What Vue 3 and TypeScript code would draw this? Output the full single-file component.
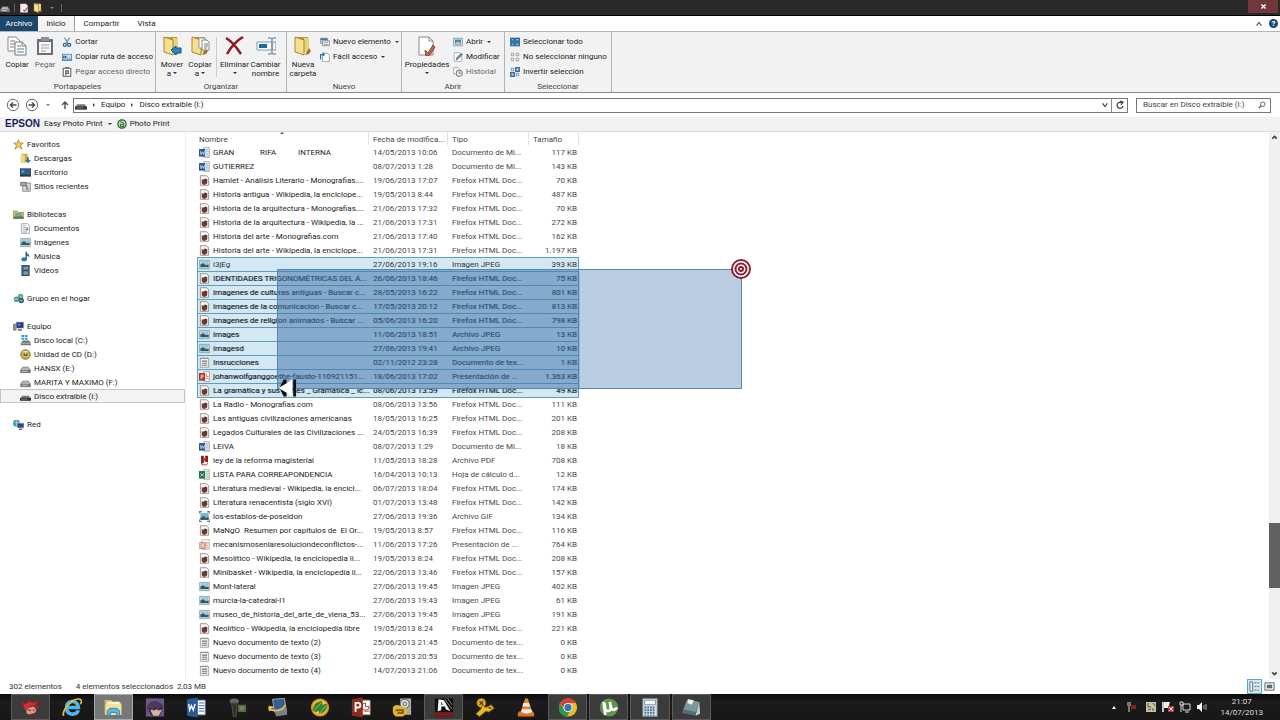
<script setup lang="ts">
import { ref } from 'vue'

interface FileRow { icon: string; name: string; date: string; type: string; size: string; selected?: boolean }
interface NavItem { icon: string; label: string; current?: boolean }
interface NavGroup { icon: string; label: string; items: NavItem[] }
interface LargeAction { icon: string; lines: string[]; menu?: boolean; wide?: boolean; off?: boolean; divider?: boolean }
interface SmallAction { icon: string; label: string; menu?: boolean; off?: boolean }
interface RibbonGroup { id: string; title: string; large: LargeAction[]; small: SmallAction[] }

const ribbon: RibbonGroup[] = [
  {
    id: 'clipboard', title: 'Portapapeles',
    large: [{ icon: 'copy', lines: ['Copiar'] }, { icon: 'paste', lines: ['Pegar'], off: true }],
    small: [
      { icon: 'cut', label: 'Cortar' },
      { icon: 'path', label: 'Copiar ruta de acceso' },
      { icon: 'shortcut', label: 'Pegar acceso directo', off: true },
    ],
  },
  {
    id: 'organize', title: 'Organizar',
    large: [
      { icon: 'move', lines: ['Mover', 'a'], menu: true },
      { icon: 'copyto', lines: ['Copiar', 'a'], menu: true },
      { icon: 'delete', lines: ['Eliminar', ''], menu: true, wide: true, divider: true },
      { icon: 'rename', lines: ['Cambiar', 'nombre'], wide: true },
    ],
    small: [],
  },
  {
    id: 'new', title: 'Nuevo',
    large: [{ icon: 'folder', lines: ['Nueva', 'carpeta'] }],
    small: [
      { icon: 'newitem', label: 'Nuevo elemento', menu: true },
      { icon: 'easy', label: 'Fácil acceso', menu: true },
    ],
  },
  {
    id: 'open', title: 'Abrir',
    large: [{ icon: 'props', lines: ['Propiedades', ''], menu: true }],
    small: [
      { icon: 'open', label: 'Abrir', menu: true },
      { icon: 'edit', label: 'Modificar' },
      { icon: 'history', label: 'Historial', off: true },
    ],
  },
  {
    id: 'select', title: 'Seleccionar', large: [],
    small: [
      { icon: 'selall', label: 'Seleccionar todo' },
      { icon: 'selnone', label: 'No seleccionar ninguno' },
      { icon: 'selinv', label: 'Invertir selección' },
    ],
  },
]

const nav: NavGroup[] = [
  { icon: 'star', label: 'Favoritos', items: [
    { icon: 'downloads', label: 'Descargas' },
    { icon: 'desktop', label: 'Escritorio' },
    { icon: 'recent', label: 'Sitios recientes' },
  ] },
  { icon: 'library', label: 'Bibliotecas', items: [
    { icon: 'document', label: 'Documentos' },
    { icon: 'image', label: 'Imágenes' },
    { icon: 'music', label: 'Música' },
    { icon: 'video', label: 'Vídeos' },
  ] },
  { icon: 'homegroup', label: 'Grupo en el hogar', items: [] },
  { icon: 'computer', label: 'Equipo', items: [
    { icon: 'localdisk', label: 'Disco local (C:)' },
    { icon: 'cd', label: 'Unidad de CD (D:)' },
    { icon: 'drive', label: 'HANSX (E:)' },
    { icon: 'drive', label: 'MARITA Y MAXIMO (F:)' },
    { icon: 'drivedark', label: 'Disco extraíble (I:)', current: true },
  ] },
  { icon: 'network', label: 'Red', items: [] },
]

const fx = 'Firefox HTML Doc...'
const files: FileRow[] = [
  { icon: 'word', name: 'GRAN             RIFA           INTERNA', date: '14/05/2013 10:06', type: 'Documento de Mi...', size: '117 KB' },
  { icon: 'word', name: 'GUTIERREZ', date: '08/07/2013 1:28', type: 'Documento de Mi...', size: '143 KB' },
  { icon: 'html', name: 'Hamlet - Análisis Literario - Monografias....', date: '19/06/2013 17:07', type: fx, size: '70 KB' },
  { icon: 'html', name: 'Historia antigua - Wikipedia, la enciclope...', date: '19/05/2013 8:44', type: fx, size: '487 KB' },
  { icon: 'html', name: 'Historia de la arquitectura - Monografias....', date: '21/06/2013 17:32', type: fx, size: '70 KB' },
  { icon: 'html', name: 'Historia de la arquitectura - Wikipedia, la ...', date: '21/06/2013 17:31', type: fx, size: '272 KB' },
  { icon: 'html', name: 'Historia del arte - Monografias.com', date: '21/06/2013 17:40', type: fx, size: '162 KB' },
  { icon: 'html', name: 'Historia del arte - Wikipedia, la enciclope...', date: '21/06/2013 17:31', type: fx, size: '1.197 KB' },
  { icon: 'image', name: 'i3jEg', date: '27/06/2013 19:16', type: 'Imagen JPEG', size: '393 KB', selected: true },
  { icon: 'html', name: 'IDENTIDADES TRIGONOMÉTRICAS DEL Á...', date: '26/06/2013 18:46', type: fx, size: '75 KB', selected: true },
  { icon: 'html', name: 'imagenes de culturas antiguas - Buscar c...', date: '28/05/2013 16:22', type: fx, size: '801 KB', selected: true },
  { icon: 'html', name: 'imagenes de la comunicacion - Buscar c...', date: '17/05/2013 20:12', type: fx, size: '813 KB', selected: true },
  { icon: 'html', name: 'imagenes de religion animados - Buscar ...', date: '05/06/2013 16:20', type: fx, size: '798 KB', selected: true },
  { icon: 'image', name: 'images', date: '11/06/2013 18:51', type: 'Archivo JPEG', size: '13 KB', selected: true },
  { icon: 'image', name: 'imagesd', date: '27/06/2013 19:41', type: 'Archivo JPEG', size: '10 KB', selected: true },
  { icon: 'text', name: 'Insrucciones', date: '02/11/2012 23:28', type: 'Documento de tex...', size: '1 KB', selected: true },
  { icon: 'ppt', name: 'johanwolfganggoethe-fausto-110921151...', date: '18/06/2013 17:02', type: 'Presentación de ...', size: '1.363 KB', selected: true },
  { icon: 'html', name: 'La gramática y sus partes _ Gramática _ Ic...', date: '08/06/2013 13:59', type: fx, size: '49 KB', selected: true },
  { icon: 'html', name: 'La Radio - Monografias.com', date: '08/06/2013 13:56', type: fx, size: '111 KB' },
  { icon: 'html', name: 'Las antiguas civilizaciones americanas', date: '18/05/2013 16:25', type: fx, size: '201 KB' },
  { icon: 'html', name: 'Legados Culturales de las Civilizaciones ...', date: '24/05/2013 16:39', type: fx, size: '208 KB' },
  { icon: 'word', name: 'LEIVA', date: '08/07/2013 1:29', type: 'Documento de Mi...', size: '18 KB' },
  { icon: 'pdf', name: 'ley de la reforma magisterial', date: '11/05/2013 18:28', type: 'Archivo PDF', size: '708 KB' },
  { icon: 'excel', name: 'LISTA PARA CORREAPONDENCIA', date: '16/04/2013 10:13', type: 'Hoja de cálculo d...', size: '12 KB' },
  { icon: 'html', name: 'Literatura medieval - Wikipedia, la encicl...', date: '06/07/2013 18:04', type: fx, size: '174 KB' },
  { icon: 'html', name: 'Literatura renacentista (siglo XVI)', date: '01/07/2013 13:48', type: fx, size: '142 KB' },
  { icon: 'gif', name: 'los-establos-de-poseidon', date: '27/06/2013 19:36', type: 'Archivo GIF', size: '134 KB' },
  { icon: 'html', name: 'MaNgO  Resumen por capítulos de  El Or...', date: '19/05/2013 8:57', type: fx, size: '116 KB' },
  { icon: 'pptold', name: 'mecanismosenlaresoluciondeconflictos-...', date: '11/06/2013 17:26', type: 'Presentación de ...', size: '764 KB' },
  { icon: 'html', name: 'Mesolítico - Wikipedia, la enciclopedia li...', date: '19/05/2013 8:24', type: fx, size: '208 KB' },
  { icon: 'html', name: 'Minibasket - Wikipedia, la enciclopedia li...', date: '22/06/2013 13:46', type: fx, size: '157 KB' },
  { icon: 'image', name: 'Mont-lateral', date: '27/06/2013 19:45', type: 'Imagen JPEG', size: '402 KB' },
  { icon: 'image', name: 'murcia-la-catedral-l1', date: '27/06/2013 19:43', type: 'Imagen JPEG', size: '61 KB' },
  { icon: 'image', name: 'museo_de_historia_del_arte_de_viena_53...', date: '27/06/2013 19:45', type: 'Imagen JPEG', size: '191 KB' },
  { icon: 'html', name: 'Neolítico - Wikipedia, la enciclopedia libre', date: '19/05/2013 8:24', type: fx, size: '221 KB' },
  { icon: 'text', name: 'Nuevo documento de texto (2)', date: '25/06/2013 21:45', type: 'Documento de tex...', size: '0 KB' },
  { icon: 'text', name: 'Nuevo documento de texto (3)', date: '27/06/2013 20:53', type: 'Documento de tex...', size: '0 KB' },
  { icon: 'text', name: 'Nuevo documento de texto (4)', date: '14/07/2013 21:06', type: 'Documento de tex...', size: '0 KB' },
]

const tasks = [
  { icon: 'natsu', name: 'Personaje', state: 'running' },
  { icon: 'ie', name: 'Internet Explorer', state: '' },
  { icon: 'explorer', name: 'Explorador de archivos', state: 'active' },
  { icon: 'anime', name: 'Retrato', state: '' },
  { icon: 'wordapp', name: 'Word', state: '' },
  { icon: 'mic', name: 'Grabadora', state: '' },
  { icon: 'pc', name: 'Equipo remoto', state: '' },
  { icon: 'leaf', name: 'Hoja', state: '' },
  { icon: 'pptapp', name: 'PowerPoint', state: '' },
  { icon: 'python', name: 'Espiral', state: '' },
  { icon: 'autodesk', name: 'Editor', state: 'running' },
  { icon: 'key', name: 'Llaves', state: '' },
  { icon: 'vlc', name: 'VLC', state: '' },
  { icon: 'chrome', name: 'Chrome', state: 'running' },
  { icon: 'utorrent', name: 'µTorrent', state: 'running' },
  { icon: 'calc', name: 'Calculadora', state: 'running' },
  { icon: 'notes', name: 'Notas', state: 'running' },
]

const search = ref('')
</script>

<template>
  <svg class="sprites" aria-hidden="true">
    <symbol id="drive" viewBox="0 0 16 16"><path d="M1 10 4 6h8l3 4v4H1z" fill="#b9b9b9" stroke="#666"/><path d="M1 10h14v4H1z" fill="#777"/><path d="M3 12h8" stroke="#eee"/></symbol>
    <symbol id="drivedark" viewBox="0 0 16 16"><path d="M1 10 3 7h10l2 3v4H1z" fill="#777"/><path d="M0 10h16v4H0z" fill="#333"/><path d="M2 12h9" stroke="#999"/></symbol>
    <symbol id="copy" viewBox="0 0 20 20"><path d="M1 1h8l4 4v10H1z" fill="#fff" stroke="#888"/><path d="M3 5h5M3 8h5M3 11h4" stroke="#777"/><path d="M8 6h7l4 4v9H8z" fill="#fff" stroke="#777"/><path d="M10 10h4M10 13h7M10 16h7" stroke="#5b7c99"/><path d="M15 6v4h4" fill="none" stroke="#777"/></symbol>
    <symbol id="paste" viewBox="0 0 20 20"><path d="M2 3h16v16H2z" fill="#6b7078"/><path d="M4 6h12v11H4z" fill="#f5f5f5"/><path d="M6 1h8v4H6z" fill="#8b9097"/><path d="M6 9h8M6 12h8M6 15h5" stroke="#9aa0a8"/></symbol>
    <symbol id="cut" viewBox="0 0 16 16"><path d="M4 1l6 10M12 1 6 11" stroke="#8694a2" stroke-width="2"/><circle cx="4.500" cy="12.500" r="2.500" fill="none" stroke="#236fa5" stroke-width="2"/><circle cx="11.500" cy="12.500" r="2.500" fill="none" stroke="#236fa5" stroke-width="2"/></symbol>
    <symbol id="path" viewBox="0 0 16 16"><path d="M0 3h16v11H0z" fill="#2d6d9f"/><path d="M1 4h14v8H1z" fill="#c9e1f4"/><path d="M3 6v4M6 6v4M9 9v1M12 9v1" stroke="#174b73" stroke-width="2"/></symbol>
    <symbol id="shortcut" viewBox="0 0 16 16"><path d="M2 2h12v13H2z" fill="#fff" stroke="#777" stroke-width="2"/><path d="M5 0h6v3H5z" fill="#777"/><path d="M6 13V6h4v4H6" fill="none" stroke="#536271" stroke-width="2"/></symbol>
    <symbol id="folder" viewBox="0 0 20 20"><path d="M3 1h12v14l-5 2-7-1z" fill="#b99b3d"/><path d="M11 2h5v14h-5z" fill="#e8d17a"/><path d="M2 1l9 3v15l-9-3z" fill="#f4df90" stroke="#a98a30"/><path d="M16 12l2 3-2 3-4 1z" fill="#9a7623"/></symbol>
    <symbol id="move" viewBox="0 0 20 20"><use href="#folder"/><path d="M9 14l5-4v2h5v5h-5v2z" fill="#2885c4" stroke="#155882"/></symbol>
    <symbol id="copyto" viewBox="0 0 20 20"><use href="#folder"/><path d="M9 2h6v10H9z" fill="#fff" stroke="#999"/><path d="M12 4h5l2 2v8h-7z" fill="#fff" stroke="#888"/><path d="M14 8h4M14 10h4M14 12h3" stroke="#777"/></symbol>
    <symbol id="delete" viewBox="0 0 20 20"><path d="M1 2c7 4 11 10 15 16M18 1C11 5 6 11 2 18" fill="none" stroke="#871c21" stroke-width="2.500"/></symbol>
    <symbol id="rename" viewBox="0 0 20 20"><path d="M1 6h15v8H1z" fill="#fff" stroke="#7b9ab4"/><path d="M3 8h8v4H3z" fill="#1d6ca1"/><path d="M12 2h3l1 1 1-1h3M16 3v14M12 18h3l1-1 1 1h3" fill="none" stroke="#58728a"/><path d="M17 6h3v8h-3" fill="none" stroke="#7b9ab4"/></symbol>
    <symbol id="newitem" viewBox="0 0 16 16"><path d="M1 2h11v8H1z" fill="#d9e6ee" stroke="#536779"/><path d="M1 2h11v3H1z" fill="#60788c"/><path d="M4 6h11v8H4z" fill="#eee" stroke="#536779"/><path d="M6 9h7M6 12h7" stroke="#6c879d"/></symbol>
    <symbol id="easy" viewBox="0 0 16 16"><path d="M5 2h7l3 3v10H4V8" fill="#fff" stroke="#778"/><path d="M1 12V4h6M4 1l3 3-3 3" fill="none" stroke="#267daa" stroke-width="2"/></symbol>
    <symbol id="props" viewBox="0 0 20 20"><path d="M2 1h10l4 4v14H2z" fill="#fff" stroke="#888"/><path d="M12 1v4h4" fill="none" stroke="#888"/><path d="M8 14l3 3 5-8 2 2-5 8-4 1z" fill="#b76c4c" stroke="#8c4b33"/></symbol>
    <symbol id="open" viewBox="0 0 16 16"><path d="M1 2h14v12H1z" fill="#eef5f9" stroke="#51718a"/><path d="M3 4h10v8H3z" fill="#4686ac"/><path d="M4 10l3-3 3 2 2-1v3H4z" fill="#b8d4c2"/></symbol>
    <symbol id="edit" viewBox="0 0 16 16"><path d="M2 1h9l3 3v11H2z" fill="#fff" stroke="#888"/><path d="M5 13l1-4 7-7 2 2-7 7z" fill="#6e94b0" stroke="#405e78"/></symbol>
    <symbol id="history" viewBox="0 0 16 16"><path d="M1 1h7l2 2v8H1z" fill="#fff" stroke="#888"/><circle cx="10" cy="10" r="5" fill="#eee" stroke="#666" stroke-width="1.500"/><path d="M10 7v3h3" fill="none" stroke="#444"/></symbol>
    <symbol id="selall" viewBox="0 0 16 16"><path d="M0 1h16v14H0z" fill="#2c7bb7"/><path d="M2 3h4v3H2zM9 3h5v3H9zM2 10h4v3H2zM9 10h5v3H9z" fill="#cce4f5" stroke="#174b75"/></symbol>
    <symbol id="selnone" viewBox="0 0 16 16"><path d="M2 2h4v4H2zM10 2h4v4h-4zM2 10h4v4H2zM10 10h4v4h-4z" fill="#fff" stroke="#777"/></symbol>
    <symbol id="selinv" viewBox="0 0 16 16"><path d="M8 0h8v8H8zM0 8h8v8H0z" fill="#2c7bb7"/><path d="M2 2h4v4H2zM10 2h4v4h-4zM2 10h4v4H2zM10 10h4v4h-4z" fill="#e6f2fa" stroke="#47657d"/></symbol>
    <symbol id="star" viewBox="0 0 16 16"><path d="M8 1l2 5h5l-4 3 2 6-5-4-5 4 2-6-4-3h5z" fill="#f3cf51" stroke="#9c7920"/></symbol>
    <symbol id="downloads" viewBox="0 0 16 16"><path d="M2 1h9v13H2z" fill="#cda949"/><path d="M1 1l6 2v12l-6-2z" fill="#f1d778"/><path d="M10 6h3v4h3l-4 5-5-5h3z" fill="#2e7eae"/></symbol>
    <symbol id="desktop" viewBox="0 0 16 16"><path d="M0 2h16v12H0z" fill="#25394f"/><path d="M1 3h14v8H1z" fill="#315e8c"/><path d="M2 5h4v3H2z" fill="#6e9cc4"/></symbol>
    <symbol id="recent" viewBox="0 0 16 16"><path d="M6 3h9v12H4V8z" fill="#ddd" stroke="#666"/><path d="M1 2h8v5H1z" fill="#aaa" stroke="#555"/><path d="M8 7l4 4M8 12h5M10 6v5" stroke="#555"/></symbol>
    <symbol id="library" viewBox="0 0 16 16"><path d="M0 3h6l1 2h9v9H0z" fill="#d7c16b" stroke="#8a7f42"/><path d="M3 6h10v6H3z" fill="#73a88c"/><path d="M1 11h14v3H1z" fill="#4c7b65"/></symbol>
    <symbol id="document" viewBox="0 0 16 16"><path d="M2 1h9l3 3v11H2z" fill="#fff" stroke="#888"/><path d="M4 4h4M4 7h8M4 10h8M4 13h6" stroke="#657b8d"/><path d="M9 7h3v4H9z" fill="#8199aa"/></symbol>
    <symbol id="image" viewBox="0 0 16 16"><path d="M1 2h14v12H1z" fill="#fff" stroke="#6f7f88"/><path d="M2 3h12v9H2z" fill="#9fc8da"/><path d="M2 8l4-2 4 3 4-1v4H2z" fill="#285c66"/></symbol>
    <symbol id="music" viewBox="0 0 16 16"><path d="M9 1v11" stroke="#1d5f88" stroke-width="2"/><ellipse cx="6" cy="12" rx="4" ry="3" fill="#247ba7"/><path d="M9 1c1 4 6 3 4 9 0-3-2-3-4-4z" fill="#1d5f88"/></symbol>
    <symbol id="video" viewBox="0 0 16 16"><path d="M2 0h12v16H2z" fill="#374b5e"/><path d="M5 2h7v5H5zM5 9h7v5H5z" fill="#6e9cbd"/><path d="M3 1v14" stroke="#ddd" stroke-dasharray="1 2"/></symbol>
    <symbol id="homegroup" viewBox="0 0 16 16"><circle cx="5" cy="9" r="4" fill="#4b9b9b"/><circle cx="11" cy="5" r="4" fill="#6aa678"/><circle cx="12" cy="11" r="4" fill="#31628c"/><path d="M2 9h5M10 4l3 3M10 11h4" stroke="#e6f1f3"/></symbol>
    <symbol id="computer" viewBox="0 0 16 16"><path d="M0 4h5v10H0z" fill="#888"/><path d="M4 1h12v10H4z" fill="#bbb"/><path d="M5 2h10v8H5z" fill="#253783"/><path d="M7 12h6v2H7z" fill="#555"/><path d="M7 4h4v3H7z" fill="#5b7acb"/></symbol>
    <symbol id="localdisk" viewBox="0 0 16 16"><path d="M2 0h4v3H2zM7 0h4v3H7zM2 4h4v3H2zM7 4h4v3H7z" fill="#2aa6c3"/><path d="M1 12l3-4h9l3 4v3H1z" fill="#777"/><path d="M1 12h15" stroke="#ccc"/></symbol>
    <symbol id="cd" viewBox="0 0 16 16"><circle cx="8" cy="8" r="7" fill="#c9a52f" stroke="#72612a"/><path d="M4 3h8v8H4z" fill="#ebe3ad"/><path d="M6 5v4h4V5" fill="none" stroke="#6b6030" stroke-width="2"/></symbol>
    <symbol id="network" viewBox="0 0 16 16"><circle cx="5" cy="6" r="5" fill="#3d9ab0"/><path d="M2 5h6M5 1v9" stroke="#b8e0db"/><path d="M6 6h10v7H6z" fill="#244a91" stroke="#bbb"/><path d="M9 14h4v2H9z" fill="#555"/></symbol>
    <symbol id="html" viewBox="0 0 16 16"><path d="M2 1h9l3 3v11H2z" fill="#f8f5f2" stroke="#75706b"/><path d="M4 6l2 1 3-2 3 1v6l-3 2H6l-2-2z" fill="#71382b"/><path d="M7 7l3-1 2 2-2 2z" fill="#3c4252"/></symbol>
    <symbol id="word" viewBox="0 0 16 16"><path d="M7 1h8v14H7z" fill="#fff" stroke="#7d8da0"/><path d="M10 4h4M10 7h4M10 10h4M10 13h4" stroke="#567aa5"/><path d="M0 3h9v11H0z" fill="#285a94"/><path d="M2 6l1 5 2-4 2 4 1-5" fill="none" stroke="#fff"/></symbol>
    <symbol id="excel" viewBox="0 0 16 16"><path d="M7 1h8v14H7z" fill="#fff" stroke="#7d9488"/><path d="M10 4h4M10 7h4M10 10h4M10 13h4" stroke="#5b8e72"/><path d="M0 3h9v11H0z" fill="#23714a"/><path d="M2 6l5 5M7 6l-5 5" stroke="#fff"/></symbol>
    <symbol id="ppt" viewBox="0 0 16 16"><path d="M7 1h8v14H7z" fill="#fff" stroke="#a0766c"/><path d="M11 4v4h3M10 11h4" fill="none" stroke="#b0503a"/><path d="M0 3h9v11H0z" fill="#a73525"/><path d="M3 12V6h3v3H3" fill="none" stroke="#fff"/></symbol>
    <symbol id="pptold" viewBox="0 0 16 16"><path d="M4 1h11v14H4z" fill="#fff" stroke="#b89b8c"/><path d="M1 5h9v9H1z" fill="#f8e5db" stroke="#b76b4d"/><path d="M3 7h5v5H3zM11 6h3M11 9h3M11 12h3" fill="none" stroke="#b76b4d"/></symbol>
    <symbol id="pdf" viewBox="0 0 16 16"><path d="M3 1h4v11H3zM9 1h4v9H9z" fill="#7c1f16"/><path d="M3 10c3 5 8 5 10 0v3c-3 3-7 3-10 0zM7 4h2v5H7z" fill="#c34428"/></symbol>
    <symbol id="gif" viewBox="0 0 16 16"><path d="M2 3h12v10H2z" fill="#7db4ce"/><path d="M2 10l5-3 3 3 4-2v5H2z" fill="#375e70"/><path d="M0 1h4M0 1v3M16 1h-4M16 1v3M0 15h4M0 15v-3M16 15h-4M16 15v-3" stroke="#507d98" stroke-width="2"/></symbol>
    <symbol id="text" viewBox="0 0 16 16"><path d="M2 2h12v13H2z" fill="#f5f5f5" stroke="#888"/><path d="M3 1v2M6 1v2M9 1v2M12 1v2" stroke="#555"/><path d="M4 6h8M4 9h8M4 12h8" stroke="#777" stroke-width="1.500"/></symbol>

    <symbol id="natsu" viewBox="0 0 22 22"><path d="M1 5l5 2 2-5 4 4 8-4-3 7 3 1-5 5-10-1-4-5z" fill="#a6202b"/><path d="M6 12l8-2 3 4-3 5-4 1-4-3z" fill="#d99a82"/><path d="M3 8l8-3 6 2-7 2-3 5-3-2z" fill="#c8323a"/><path d="M7 19l8 3h2l-2-5z" fill="#7c2025"/><path d="M8 14h3M13 14h2" stroke="#321"/></symbol>
    <symbol id="ie" viewBox="0 0 22 22"><path d="M18 14c-2 6-12 6-13-2-1-9 12-11 13-1H7" fill="none" stroke="#4db6e8" stroke-width="4"/><path d="M2 20C-2 15 15-3 21 3c1 1 0 3-1 4" fill="none" stroke="#e2b93f" stroke-width="2"/></symbol>
    <symbol id="explorer" viewBox="0 0 24 22"><path d="M2 2h8l2 3h10v14H2z" fill="#d8bd60"/><path d="M3 7h19v13H3z" fill="#f4e3a0"/><path d="M5 4h15v3H5z" fill="#fff5c8"/><path d="M5 15l3-3h9l3 3v6h-4v-4H9v4H5z" fill="#62b3dc" stroke="#307dab"/></symbol>
    <symbol id="anime" viewBox="0 0 22 22"><path d="M1 1h20v20H1z" fill="#6b5785"/><path d="M3 12c0-10 16-10 17 0l-4 8H7z" fill="#35263f"/><path d="M6 14l3 6h6l4-7-3 1-3-1-3 1-2-1z" fill="#d8b3a5"/><path d="M2 12C3 2 18 1 20 13l-3-3-2 5-3-5-3 5-2-4-3 5z" fill="#4b3962"/></symbol>
    <symbol id="wordapp" viewBox="0 0 22 22"><path d="M11 3h10v16H11z" fill="#fff" stroke="#8aa7ca"/><path d="M14 6h6M14 9h6M14 12h6M14 15h6" stroke="#2d62a2"/><path d="M1 2l12-2v22L1 20z" fill="#285896"/><path d="M3 7l1 7 2-5 2 5 2-7" fill="none" stroke="#fff" stroke-width="1.500"/></symbol>
    <symbol id="mic" viewBox="0 0 22 22"><ellipse cx="8" cy="4" rx="5" ry="3" fill="#666"/><path d="M5 6h6l-1 15H7z" fill="#303030" stroke="#555"/><path d="M12 8h9v8h-9z" fill="#59693f"/><path d="M14 10h5v4h-5z" fill="#75885a"/></symbol>
    <symbol id="pc" viewBox="0 0 22 22"><path d="M5 2l13-1 2 12-13 2z" fill="#355d91" stroke="#a6b0bc"/><path d="M7 15l14-2v6l-12 2z" fill="#7b8087"/><path d="M1 10c3 7 15 5 18-2M1 10l1 5M1 10l5 1" fill="none" stroke="#e0c052" stroke-width="2"/></symbol>
    <symbol id="leaf" viewBox="0 0 22 22"><circle cx="11" cy="11" r="10" fill="#e58f2b"/><circle cx="11" cy="11" r="8" fill="#f1c84e"/><path d="M3 14C4 5 10 4 13 4c2 5-1 11-7 12zM10 18c-1-8 4-11 9-11 0 6-3 11-9 11z" fill="#34852f"/><path d="M5 14l7-8M11 17l7-9" stroke="#93c657"/></symbol>
    <symbol id="pptapp" viewBox="0 0 22 22"><path d="M10 3h11v16H10z" fill="#fff" stroke="#b3867d"/><path d="M16 6v4h4a4 4 0 1 1-4-4M14 15h6" fill="none" stroke="#a53c2b"/><path d="M1 2l12-2v22L1 20z" fill="#8f2c22"/><path d="M5 16V6h3c3 0 3 5 0 5H5" fill="none" stroke="#fff" stroke-width="2"/></symbol>
    <symbol id="python" viewBox="0 0 22 22"><path d="M9 1h12v18H9z" fill="#aaa"/><circle cx="14" cy="7" r="5" fill="#ddd" stroke="#555"/><circle cx="14" cy="7" r="2" fill="none" stroke="#555"/><path d="M1 11c3-5 9-2 12 1h4v5l-5 4H4c-4-4-3-5-3-10z" fill="#e2b52e"/><path d="M4 14h8v3H6" fill="none" stroke="#7c5b15" stroke-width="2"/></symbol>
    <symbol id="autodesk" viewBox="0 0 22 22"><path d="M1 1h20v20H1z" fill="#0e0e0e"/><path d="M4 15L5 2l6 1 7 12-5-2-1-3H8v4z" fill="#f3f3f3"/><path d="M8 5l2 3H8z" fill="#222"/><path d="M1 16h20v5H1z" fill="#7d1721"/><path d="M12 2l8 11M15 1l5 7" stroke="#999"/></symbol>
    <symbol id="key" viewBox="0 0 22 22"><circle cx="7" cy="6" r="5" fill="#e9b62b" stroke="#815d10"/><path d="M8 8l4 3 6-3 3 4-6 4-3-1-7 6-4-3 6-6z" fill="#e9b62b" stroke="#815d10"/><path d="M5 4l4 4M9 4L5 8M15 11l3 1" stroke="#493811" stroke-width="1.500"/></symbol>
    <symbol id="vlc" viewBox="0 0 22 22"><path d="M2 17l2-2h14l2 2v4H2z" fill="#db7420"/><path d="M10 1h3l5 16c-3 2-10 2-13 0z" fill="#e98520"/><path d="M8 6h6l2 4H7zM6 13h11l1 3c-3 2-9 2-12 0z" fill="#e8e8e8"/></symbol>
    <symbol id="chrome" viewBox="0 0 22 22"><circle cx="11" cy="11" r="10" fill="#e5bd2c"/><path d="M2 6C6-1 17-1 20 6h-9c-3 0-5 2-4 6z" fill="#d24137"/><path d="M2 6l6 9c2 2 4 1 5 0l-3 6C3 21-1 13 2 6z" fill="#319447"/><circle cx="11" cy="11" r="5" fill="#fff"/><circle cx="11" cy="11" r="4" fill="#3477bd"/></symbol>
    <symbol id="utorrent" viewBox="0 0 22 22"><circle cx="11" cy="11" r="10" fill="#5e974a"/><path d="M5 5l2 14M6 6l1 7c1 3 6 2 6-1l-1-7M13 10c1 5 5 4 7 1" fill="none" stroke="#fff" stroke-width="3"/></symbol>
    <symbol id="calc" viewBox="0 0 22 22"><path d="M3 1h16v20H3z" fill="#d4e2eb" stroke="#687d8e"/><path d="M5 3h12v5H5z" fill="#f7fbff" stroke="#7890a3"/><path d="M6 10v10M9 10v10M12 10v10M15 10v10" stroke="#517087" stroke-width="2" stroke-dasharray="2 1"/></symbol>
    <symbol id="notes" viewBox="0 0 22 22"><path d="M6 3l15 2-5 15-15-3z" fill="#536e7b"/><path d="M7 2l13 3-4 11-13-3z" fill="#7e979f"/><path d="M8 2l6 1-2 5-5-2z" fill="#eee"/><path d="M20 5l1 13-5 2z" fill="#c9d2d5"/></symbol>
  </svg>

  <div class="desktop">
    <header class="titlebar">
      <svg class="i10"><use href="#drive" /></svg>
      <span class="bar"></span>
      <svg class="i10" viewBox="0 0 16 16"><path d="M2 1h9l3 3v11H2z" fill="#f2eeee" /><path d="M7 11l2 2 5-6" fill="none" stroke="#c0504a" stroke-width="2" /></svg>
      <svg class="i10"><use href="#folder" /></svg>
      <span class="caret light"></span>
      <span class="bar"></span>
      <button class="close" aria-label="Cerrar"><svg viewBox="0 0 10 10"><path d="M2 2l6 6M8 2l-6 6" stroke="#fff" stroke-width="2" /></svg></button>
    </header>

    <nav class="tabs" aria-label="Cinta">
      <button class="tab file">Archivo</button>
      <button class="tab current">Inicio</button>
      <button class="tab share">Compartir</button>
      <button class="tab">Vista</button>
      <span class="spacer"></span>
      <button class="plain" aria-label="Minimizar la cinta"><svg class="i8" viewBox="0 0 10 10"><path d="M2 7l3-4 3 4" fill="none" stroke="#555" stroke-width="1.500" /></svg></button>
      <button class="help" aria-label="Ayuda">?</button>
    </nav>

    <section class="ribbon">
      <div v-for="g in ribbon" :key="g.id" class="group" :class="g.id">
        <div class="actions">
          <template v-for="a in g.large" :key="a.icon">
            <span v-if="a.divider" class="divider"></span>
            <button class="large" :class="{ wide: a.wide, off: a.off }">
              <svg><use :href="'#' + a.icon" /></svg>
              <span v-for="(line, n) in a.lines" :key="n" class="line">{{ line }}<i v-if="a.menu && n === 1" class="caret" :class="{ alone: !line }"></i></span>
            </button>
          </template>
          <div v-if="g.small.length" class="smalls">
            <button v-for="s in g.small" :key="s.label" class="small" :class="{ off: s.off }">
              <svg><use :href="'#' + s.icon" /></svg>{{ s.label }}<i v-if="s.menu" class="caret"></i>
            </button>
          </div>
        </div>
        <div class="title">{{ g.title }}</div>
      </div>
    </section>

    <div class="address">
      <button class="plain" aria-label="Atrás"><svg class="i14" viewBox="0 0 16 16"><circle cx="8" cy="8" r="6.500" fill="#fff" stroke="#555" /><path d="M12 8H5M8 5L5 8l3 3" fill="none" stroke="#444" stroke-width="1.500" /></svg></button>
      <button class="plain" aria-label="Adelante"><svg class="i14" viewBox="0 0 16 16"><circle cx="8" cy="8" r="6.500" fill="#fff" stroke="#555" /><path d="M4 8h7M8 5l3 3-3 3" fill="none" stroke="#444" stroke-width="1.500" /></svg></button>
      <span class="caret grey"></span>
      <button class="plain" aria-label="Subir"><svg class="i10" viewBox="0 0 10 10"><path d="M5 9V2M2 5l3-3 3 3" fill="none" stroke="#555" stroke-width="1.500" /></svg></button>
      <div class="crumbs">
        <svg class="i12"><use href="#drivedark" /></svg>
        <span class="arrow"></span><a href="#equipo">Equipo</a>
        <span class="arrow"></span><a href="#disco">Disco extraíble (I:)</a>
        <span class="spacer"></span>
        <button class="plain" aria-label="Ubicaciones anteriores"><svg class="i8" viewBox="0 0 10 10"><path d="M2 3l3 4 3-4" fill="none" stroke="#444" stroke-width="1.500" /></svg></button>
        <button class="refresh" aria-label="Actualizar"><svg class="i10" viewBox="0 0 10 10"><path d="M7 3a3 3 0 1 0 1 3M5 1l3 1-2 3" fill="none" stroke="#444" stroke-width="1.300" /></svg></button>
      </div>
      <label class="search">
        <input v-model="search" type="text" placeholder="Buscar en Disco extraíble (I:)" aria-label="Buscar" />
        <svg class="i8" viewBox="0 0 10 10"><circle cx="6" cy="4" r="2.800" fill="none" stroke="#444" /><path d="M4 6L1 9" stroke="#444" stroke-width="1.500" /></svg>
      </label>
    </div>

    <div class="epson">
      <strong>EPSON</strong>
      <button class="plain">Easy Photo Print</button>
      <span class="caret"></span>
      <button class="plain photo"><svg class="i10" viewBox="0 0 12 12"><circle cx="6" cy="6" r="5" fill="#b9dfb2" stroke="#2c6a30" stroke-width="1.500" /><path d="M4 3l4 2v4H4V6l3 1" fill="none" stroke="#1f5224" /></svg>Photo Print</button>
    </div>

    <main class="body">
      <aside class="side">
        <section v-for="g in nav" :key="g.label">
          <a class="node" href="#nav"><svg><use :href="'#' + g.icon" /></svg>{{ g.label }}</a>
          <a v-for="it in g.items" :key="it.label" class="node child" :class="{ current: it.current }" href="#nav"><svg><use :href="'#' + it.icon" /></svg>{{ it.label }}</a>
        </section>
      </aside>

      <section class="list">
        <table>
          <colgroup><col class="c-name" /><col class="c-date" /><col class="c-type" /><col class="c-size" /></colgroup>
          <thead>
            <tr><th class="sorted">Nombre</th><th>Fecha de modifica...</th><th>Tipo</th><th>Tamaño</th></tr>
          </thead>
          <tbody>
            <tr v-for="f in files" :key="f.name" :class="{ selected: f.selected }">
              <td class="name"><svg><use :href="'#' + f.icon" /></svg><span>{{ f.name }}</span></td>
              <td>{{ f.date }}</td><td>{{ f.type }}</td><td class="size">{{ f.size }}</td>
            </tr>
          </tbody>
        </table>
        <div class="marquee">
          <svg class="target" viewBox="0 0 20 20"><circle cx="10" cy="10" r="9" fill="#fff" stroke="#8b2030" stroke-width="2" /><circle cx="10" cy="10" r="5.500" fill="#fff" stroke="#8b2030" stroke-width="2" /><circle cx="10" cy="10" r="2" fill="#fff" stroke="#8b2030" stroke-width="2" /></svg>
          <svg class="pointer" viewBox="0 0 20 20"><path d="M1 10L15 1v18z" fill="#fff" /><path d="M2 9L6 1h3v4zM2 11l4 8h3v-4zM16 1h3v18h-3z" fill="#111" /></svg>
        </div>
      </section>

      <div class="scroll" aria-hidden="true">
        <svg viewBox="0 0 10 10"><path d="M3 6l2-2 2 2" fill="none" stroke="#444" stroke-width="1.500" /></svg>
        <span class="track"><span class="thumb"></span></span>
        <svg viewBox="0 0 10 10"><path d="M3 4l2 2 2-2" fill="none" stroke="#444" stroke-width="1.500" /></svg>
      </div>
    </main>

    <footer class="status">
      <span>302 elementos</span><span>4 elementos seleccionados&nbsp; 2,03 MB</span>
      <span class="spacer"></span>
      <button class="view on" aria-label="Detalles"><svg viewBox="0 0 12 12"><path d="M1 1h3v10H1z" fill="#fff" stroke="#567" /><path d="M6 2h2M9 2h2M6 6h2M9 6h2M6 10h2M9 10h2" stroke="#567" /></svg></button>
      <button class="view" aria-label="Iconos grandes"><svg viewBox="0 0 12 12"><path d="M1 2h10v8H1z" fill="#fff" stroke="#555" /><path d="M3 4h6v4H3z" fill="#4c6f82" /></svg></button>
    </footer>

    <footer class="taskbar">
      <div class="tasks">
        <button v-for="t in tasks" :key="t.icon" class="task" :class="t.state" :aria-label="t.name"><svg><use :href="'#' + t.icon" /></svg></button>
      </div>
      <span class="spacer"></span>
      <div class="tray">
        <svg viewBox="0 0 12 12"><path d="M4 8l2-3 2 3z" fill="#fff" /></svg>
        <svg viewBox="0 0 12 12"><path d="M2 1h4v4H5v6H3V5H2z" fill="#777" /><path d="M6 4h5v4H6z" fill="#7a2428" /></svg>
        <svg class="apart" viewBox="0 0 12 12"><path d="M1 1h10v10H1z" fill="#c9c29d" /><path d="M3 2v4h3M8 2l2 3M3 9l3-1M8 7v3" fill="none" stroke="#554" /></svg>
        <svg viewBox="0 0 12 12"><path d="M1 1v10" stroke="#fff" stroke-width="1.500" /><path d="M2 1h6l-1 3 1 3H2z" fill="#eee" /><path d="M6 5h6v6H6z" fill="#b6343a" /><path d="M7 6l4 4M11 6l-4 4" stroke="#fff" /></svg>
        <svg viewBox="0 0 12 12"><path d="M4 3h7v6H4zM6 11h4" fill="none" stroke="#ddd" /><path d="M1 1h3v3H1zM2 4v7" fill="none" stroke="#ddd" /></svg>
        <svg viewBox="0 0 12 12"><path d="M1 4h2l3-3v10L3 8H1z" fill="#fff" /><path d="M8 4v4M10 3v6" stroke="#aaa" /></svg>
      </div>
      <time class="clock"><span>21:07</span><span>14/07/2013</span></time>
    </footer>
  </div>
</template>

<style>
body { margin: 0; }
</style>

<style scoped>
.sprites { position: absolute; width: 0; height: 0; }
.desktop { display: flex; flex-direction: column; min-height: 100vh; background: #fff; color: #1c1c1c; font: 8px/14px Roboto, "Noto Sans", sans-serif; overflow: hidden; }
button { font: inherit; color: inherit; background: none; border: 0; padding: 0; margin: 0; display: flex; align-items: center; white-space: nowrap; }
a { color: inherit; text-decoration: none; }
svg { display: block; flex: none; }
.spacer { flex: 1; }
.i8 { width: 8px; height: 8px; }
.i10 { width: 10px; height: 10px; }
.i12 { width: 12px; height: 12px; }
.i14 { width: 14px; height: 14px; }
.caret { display: inline-block; flex: none; border: 2px solid transparent; border-top-color: #333; border-bottom: 0; margin-left: 4px; }
.caret.light { border-top-color: #888; margin: 0 3px; }
.caret.grey { border-top-color: #777; margin: 0; }

.titlebar { display: flex; align-items: center; height: 15px; background: #292929; border-bottom: 1px solid #000; gap: 4px; flex: none; }
.bar { width: 1px; height: 8px; background: #666; }
.titlebar .close { margin: 0 2px 2px auto; width: 30px; height: 13px; background: #70383c; justify-content: center; }
.close svg { width: 7px; height: 7px; }

.tabs { display: flex; height: 15px; border-bottom: 1px solid #b5b5b5; flex: none; align-items: stretch; padding-right: 2px; }
.tab { justify-content: center; min-width: 37px; padding: 0 4px; }
.tab.file { background: #1c466b; color: #fff; width: 38px; }
.tab.current { background: #f4f4f4; border-right: 1px solid #999; }
.tab.share { width: 53px; }
.help { align-self: center; justify-content: center; width: 9px; height: 9px; margin-left: 6px; border-radius: 50%; background: #174a6b; color: #fff; font-weight: 700; }

.ribbon { display: flex; min-height: 60px; background: #f2f2f2; border-bottom: 1px solid #8a8a8a; flex: none; }
.group { display: flex; flex-direction: column; border-right: 1px solid #b4b4b4; padding: 2px 2px 0; box-sizing: border-box; }
.clipboard { width: 156px; }
.organize { width: 131px; }
.new { width: 115px; }
.open { width: 103px; }
.select { width: 107px; }
.actions { display: flex; flex: 1; }
.title { text-align: center; line-height: 11px; color: #444; }
.large { flex-direction: column; width: 28px; padding-top: 2px; line-height: 9px; }
.large svg { width: 20px; height: 20px; margin-bottom: 4px; }
.large.wide { width: 31px; }
.large .line { min-height: 9px; }
.open .large { width: 46px; }
.large .caret { margin: 0 0 2px 2px; }
.large .caret.alone { margin-left: 0; }
.clipboard .large { width: 29px; }
.clipboard .actions { padding-left: 1px; }
.off { color: #666; }
.divider { width: 1px; height: 40px; background: #ccc; margin: 3px 2px 0; }
.smalls { padding-left: 3px; }
.small { height: 15px; line-height: 15px; }
.small svg { width: 10px; height: 10px; margin-right: 3px; }

.address { display: flex; align-items: center; height: 24px; padding: 0 9px 0 6px; flex: none; }
.address > .plain + .plain { margin-left: 5px; }
.address > .grey { margin: 0 10px 0 7px; }
.crumbs { display: flex; align-items: center; flex: 1; height: 13px; border: 1px solid #777; margin: 0 8px 0 3px; padding-left: 1px; }
.arrow { border: 2px solid transparent; border-left-color: #444; border-right: 0; margin: 0 6px; }
.refresh { height: 13px; width: 16px; border-left: 1px solid #888; justify-content: center; margin-left: 2px; }
.search { display: flex; align-items: center; box-sizing: border-box; width: 135px; height: 15px; border: 1px solid #777; padding: 0 4px 0 6px; }
.search input { flex: 1; min-width: 0; border: 0; padding: 0; outline: 0; font: inherit; background: none; }
.search input::placeholder { color: #444; opacity: 1; }

.epson { display: flex; align-items: center; height: 14px; padding: 0 5px; background: #f1f1f1; border-bottom: 1px solid #dcdcdc; flex: none; }
.epson strong { font: 700 10px/14px "Liberation Sans", Arial, sans-serif; color: #1a1d63; margin-right: 4px; }
.epson .caret { margin: 0 5px; }
.photo svg { margin-right: 3px; }

.body { display: flex; flex: 1; }
.side { width: 186px; box-sizing: border-box; border-right: 1px solid #eee; padding: 5px 0 0; }
.side section { margin-bottom: 14px; }
.node { display: flex; align-items: center; box-sizing: border-box; height: 14px; line-height: 12px; padding: 2px 0 0 13px; }
.node svg { width: 11px; height: 11px; margin: -2px 3px 0 0; }
.node.child { padding-left: 20px; }
.node.current { background: #f3f3f3; box-shadow: inset 0 0 0 1px #c5c5c5; }

.list { position: relative; flex: 1; padding-left: 11px; }
table { table-layout: fixed; width: 382px; border-collapse: separate; border-spacing: 0; }
.c-name { width: 172px; }
.c-date { width: 79px; }
.c-type { width: 81px; }
.c-size { width: 50px; }
th { position: relative; height: 11px; line-height: 11px; padding: 2px 0 0 4px; font-weight: 400; text-align: left; color: #444; white-space: nowrap; box-shadow: inset -1px 0 0 #e2e2e2; }
th:first-child { padding-left: 2px; }
.sorted::after { content: ""; position: absolute; top: 0; left: 83px; border: 2px solid transparent; border-bottom-color: #555; border-top: 0; }
td { height: 12px; line-height: 12px; padding: 2px 0 0 4px; color: #4a4a4a; white-space: pre; }
td.name { display: flex; align-items: center; padding-left: 2px; color: #1c1c1c; }
td.name svg { width: 11px; height: 11px; margin: -2px 3px 0 0; }
td.size { text-align: right; padding: 2px 2px 0 0; }
.selected { background: #d3e8f2; box-shadow: inset 1px 1px 0 #5d9dbd, inset -1px 0 0 #5d9dbd, 0 1px 0 #5d9dbd; }
.selected td { color: #333; }
.selected + .selected td { color: #0a1420; text-shadow: 1px 0 0 rgba(20, 40, 70, .35); }
.marquee { position: absolute; left: 91px; top: 137px; width: 463px; height: 118px; border: 1px solid #5488b4; background: linear-gradient(90deg, rgba(50, 105, 165, .24) 302px, transparent 302px), rgba(82, 130, 180, .4); }
.target { position: absolute; right: -10px; top: -11px; width: 20px; height: 20px; }
.pointer { position: absolute; left: 0; bottom: -10px; width: 19px; height: 20px; }

.scroll { display: flex; flex-direction: column; width: 11px; background: #f0f0f0; }
.scroll svg { width: 11px; height: 11px; }
.track { display: flex; flex-direction: column; flex: 1; }
.track::before { content: ""; flex: 381; }
.track::after { content: ""; flex: 80; }
.thumb { flex: 65; background: #606060; }

.status { display: flex; align-items: center; gap: 14px; height: 15px; padding: 0 3px 0 9px; color: #333; flex: none; }
.view { width: 15px; height: 15px; justify-content: center; margin-left: -14px; }
.view svg { width: 11px; height: 11px; }
.view.on { margin-left: 0; background: #cfe9f5; box-shadow: inset 0 0 0 1px #5aa5c8; }

.taskbar { display: flex; align-items: center; height: 26px; background: linear-gradient(#0b0b0b, #1b1b1b 30%, #171717); flex: none; color: #ddd; }
.tasks { display: flex; flex: 0 1 702px; height: 26px; padding-left: 10px; }
.task { flex: 1; justify-content: center; margin: 0 1px; height: 26px; }
.task svg { width: 20px; height: 21px; }
.task.running { background: #3b3b3b; box-shadow: inset 0 0 0 1px #5a5a5a; }
.task.active { background: #777; box-shadow: inset 0 0 0 1px #aaa; }
.tray { display: flex; gap: 5px; align-items: center; }
.tray svg { width: 12px; height: 12px; }
.tray .apart { margin-left: 3px; }
.clock { display: flex; flex-direction: column; align-items: center; line-height: 11px; margin: 0 17px 0 12px; }
</style>
